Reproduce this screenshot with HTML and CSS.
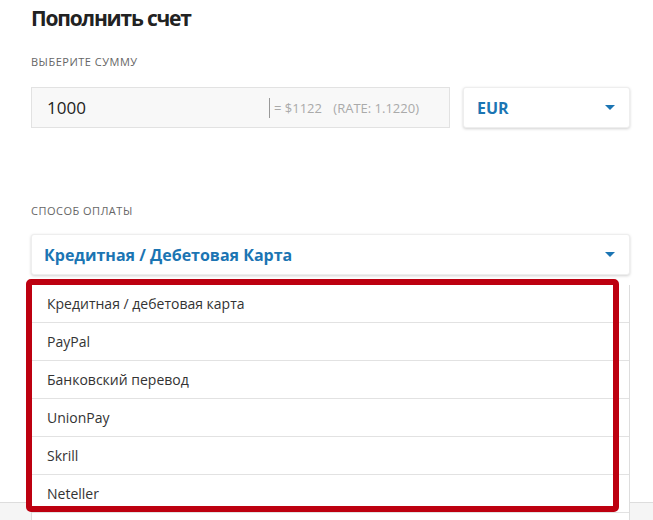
FILE: index.html
```html
<!DOCTYPE html>
<html lang="ru">
<head>
    <meta charset="UTF-8">
    <meta name="viewport" content="width=device-width, initial-scale=1.0">
    <title>Пополнить счет</title>

    <link rel="stylesheet" href="styles.css">
</head>
<body>

<form id="deposit">
    <h1>Пополнить счет</h1>

    <p class="label">Выберите сумму</p>
    <div class="amount-row">
        <div class="amount">
            <span class="amount-value">1000</span>
            <span class="amount-convert">= $1122 <span class="rate">(RATE: 1.1220)</span></span>
        </div>
        <div class="select">
            <span>EUR</span>
            <i class="caret"></i>
        </div>
    </div>

    <p class="label label-method">Способ оплаты</p>
    <div class="method">
        <div class="select select-wide">
            <span>Кредитная / Дебетовая Карта</span>
            <i class="caret"></i>
        </div>

        <ul class="options">
            <li>Кредитная / дебетовая карта</li>
            <li>PayPal</li>
            <li>Банковский перевод</li>
            <li>UnionPay</li>
            <li>Skrill</li>
            <li>Neteller</li>
        </ul>
        <div class="highlight"></div>
    </div>
</form>

<div id="footer"></div>

</body>
</html>
```

FILE: styles.css
```css
* {
    box-sizing: border-box;
    font-family: 'Open Sans', 'Noto Sans', sans-serif;
}

body {
    margin: 0;
    padding: 0;
    height: 100vh;
    overflow: hidden;
    color: #333;
}

#deposit {
    height: 502px;
    padding: 0 23px 0 31px;
}

#deposit > h1 {
    margin: 0;
    padding-top: 2px;
    font-size: 21px;
    line-height: 32px;
    font-weight: 700;
    letter-spacing: -1.2px;
    color: #222;
}

.label {
    margin: 20px 0 0;
    font-size: 11px;
    line-height: 16px;
    letter-spacing: 0.5px;
    text-transform: uppercase;
    color: #666;
}
.label-method {
    margin-top: 75px;
}

.amount-row {
    display: grid;
    grid-template-columns: 1fr 167px;
    gap: 13px;
    margin-top: 17px;
}

.amount {
    display: flex;
    align-items: center;
    height: 41px;
    padding: 0 30px 0 15px;
    background-color: #f8f8f8;
    border: 1px solid #e2e2e2;
}
.amount-value {
    flex-grow: 1;
    font-size: 17px;
    color: #222;
}
.amount-convert {
    border-left: 1px solid #999;
    padding-left: 4px;
    font-size: 13px;
    line-height: 20px;
    color: #aaa;
}
.rate {
    margin-left: 8px;
}

.select {
    display: flex;
    align-items: center;
    justify-content: space-between;
    height: 41px;
    padding: 0 14px 0 13px;
    background-color: #fff;
    border: 1px solid #eee;
    border-radius: 3px;
    box-shadow: 0 1px 3px rgba(0, 0, 0, 0.18);
    font-size: 16px;
    font-weight: 700;
    color: #1b75b3;
}
.select-wide {
    padding-left: 12px;
}
.caret {
    width: 0;
    height: 0;
    border-left: 5px solid transparent;
    border-right: 5px solid transparent;
    border-top: 5px solid #1b75b3;
}

.method {
    position: relative;
    margin-top: 15px;
}

.options {
    position: absolute;
    top: 51px;
    left: 0;
    width: 599px;
    height: 240px;
    margin: 0;
    padding: 0;
    list-style: none;
    background-color: #fff;
    border: 1px solid #ddd;
    border-top: none;
}
.options li {
    height: 38px;
    padding-left: 15px;
    border-bottom: 1px solid #e2e2e2;
    font-size: 14px;
    line-height: 37px;
    color: #333;
}

.highlight {
    position: absolute;
    top: 45px;
    left: -5px;
    width: 593px;
    height: 233px;
    border: 6px solid #bd0010;
    border-radius: 5px;
}

#footer {
    height: 100%;
    background-color: #f5f5f5;
    border-top: 1px solid #ddd;
}
```
